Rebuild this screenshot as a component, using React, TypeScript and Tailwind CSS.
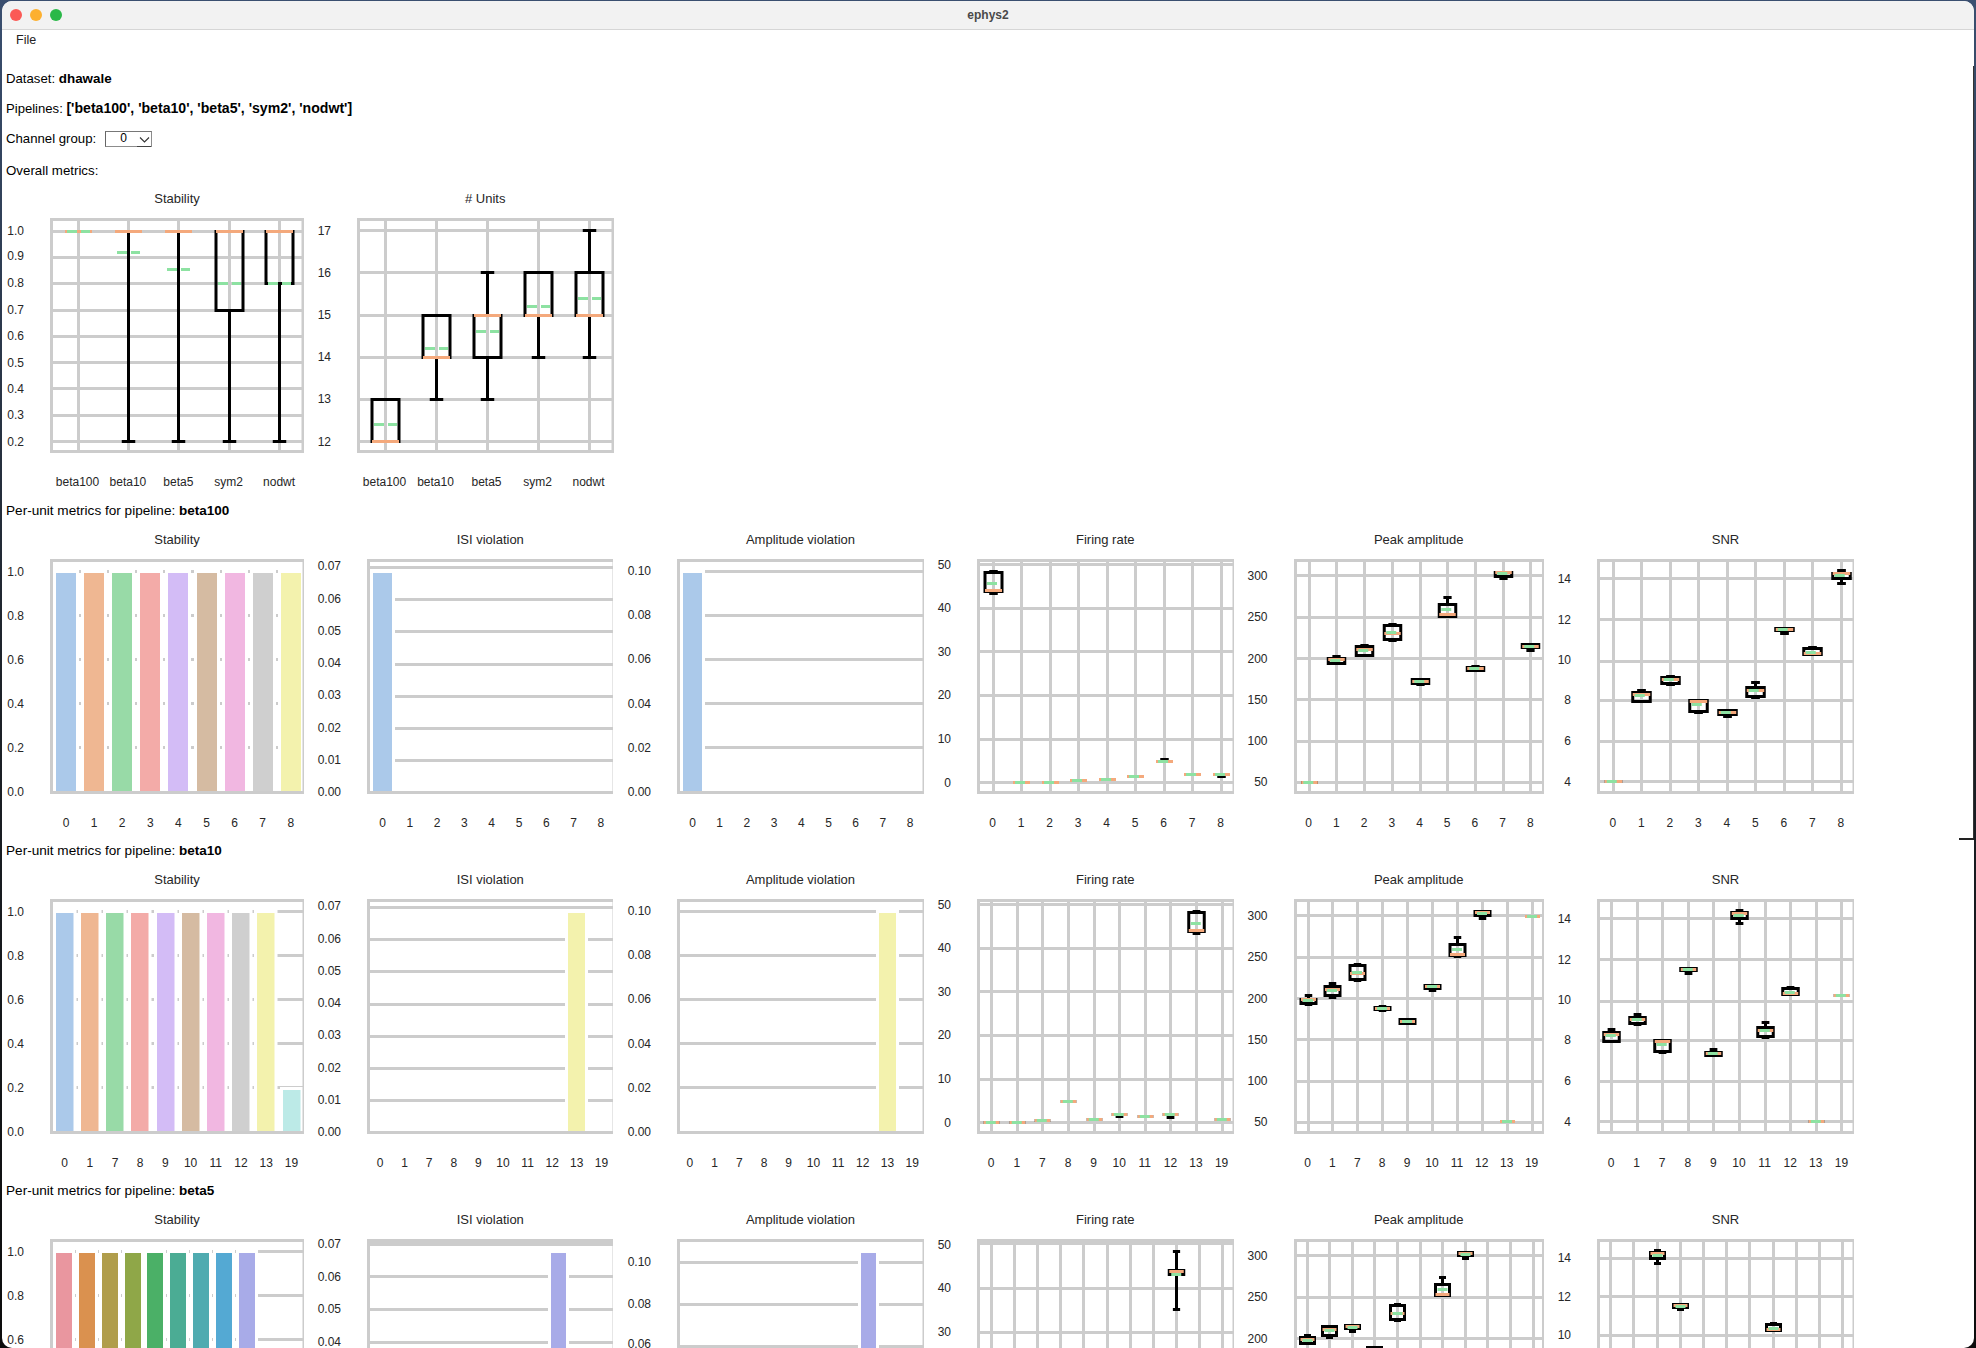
import { ReactNode } from "react"

const GRID = "#cccccc"
const MEDIAN = "#f4a97c"
const MEAN = "#8de2a2"

// chart y values are kept in thirds of a pixel, counted so that 177 is the top of a plot
const Y0 = (v: number) => Math.round(v / 3 - 22)
const Y = (v: number) => Y0(v) + 0.5
const X = (v: number) => Math.round(v) + 0.5

type Box = { i: number; top: number; bot: number; med: number; mean: number; hi?: number; lo?: number }
type Bar = { i: number; color: string; top?: number }

const b = (i: number, top: number, bot: number, med: number, mean = med, hi?: number, lo?: number): Box => ({
  i, top, bot, med, mean, hi, lo,
})
const flat = (i: number, at: number) => b(i, at, at, at)

const PASTEL = ["#abc9ea", "#efb792", "#98daa7", "#f3aba8", "#d3bcf6", "#d5bba2", "#f1b7e1", "#cfcfcf", "#f3f2ad", "#bceae7"]
const HUSL = ["#e9969f", "#da914f", "#b09d4b", "#8fa748", "#4bb067", "#4bac94", "#4fabb0", "#54a9d3", "#a8abe8"]

const U9 = ["0", "1", "2", "3", "4", "5", "6", "7", "8"]
const U10 = ["0", "1", "7", "8", "9", "10", "11", "12", "13", "19"]
const OVERALL = ["beta100", "beta10", "beta5", "sym2", "nodwt"]

const ISI_Y = [197, 296, 392, 488, 584, 683, 779, 875]
const ISI_T = ["0.07", "0.06", "0.05", "0.04", "0.03", "0.02", "0.01", "0.00"]
const ISI_H = [200, 296, 392, 491, 587, 683, 779]
const AMP_Y = [212, 344, 476, 611, 743, 875]
const AMP_T = ["0.10", "0.08", "0.06", "0.04", "0.02", "0.00"]
const AMP_H = [214, 346, 478, 610, 742]
const STAB_Y = [215, 347, 479, 611, 743, 875]
const STAB_T = ["1.0", "0.8", "0.6", "0.4", "0.2", "0.0"]
const STAB_H = [214, 346, 478, 610, 742]
const FIRE_Y = [194, 323, 455, 584, 716, 848]
const FIRE_T = ["50", "40", "30", "20", "10", "0"]
const FIRE_H = [193, 325, 454, 586, 718, 847]
const PEAK_Y = [227, 350, 476, 599, 722, 845]
const PEAK_T = ["300", "250", "200", "150", "100", "50"]
const PEAK_H = [226, 352, 475, 598, 722, 847]
const SNR_Y = [236, 359, 479, 601, 722, 845]
const SNR_T = ["14", "12", "10", "8", "6", "4"]
const SNR_H = [235, 358, 482, 601, 724, 844]

type ChartProps = {
  title: string
  left: number
  width: number
  x0: number
  x1: number
  ticks: string[]
  tickY: number[]
  hLines: number[]
  xStart: number
  xStep: number
  xLabels?: string[]
  vLines?: number
  bars?: Bar[]
  barW?: number
  boxes?: Box[]
  boxW?: number
  rightW?: number
}

function BoxGlyph({ box, x, w }: { box: Box; x: number; w: number }) {
  const l = x - w / 2
  const cap = w / 4
  return (
    <g>
      {box.hi !== undefined && <line x1={x} x2={x} y1={Y(box.top)} y2={Y(box.hi)} stroke="#000" strokeWidth={3} />}
      {box.lo !== undefined && <line x1={x} x2={x} y1={Y(box.bot)} y2={Y(box.lo)} stroke="#000" strokeWidth={3} />}
      {box.hi !== undefined && <line x1={x - cap} x2={x + cap} y1={Y(box.hi)} y2={Y(box.hi)} stroke="#000" strokeWidth={3} />}
      {box.lo !== undefined && <line x1={x - cap} x2={x + cap} y1={Y(box.lo)} y2={Y(box.lo)} stroke="#000" strokeWidth={3} />}
      <path d={`M${l} ${Y(box.top)}H${l + w}V${Y(box.bot)}H${l}Z`} fill="none" stroke="#000" strokeWidth={3} />
      <line x1={l} x2={l + w} y1={Y(box.med)} y2={Y(box.med)} stroke={MEDIAN} strokeWidth={3} />
      <line x1={l + 2} x2={l + w - 2} y1={Y(box.mean)} y2={Y(box.mean)} stroke={MEAN} strokeWidth={3} strokeDasharray="10 4" />
    </g>
  )
}

function Chart({
  title, left, width, x0, x1, ticks, tickY, hLines, xStart, xStep, xLabels = [], vLines = 0, bars = [], barW = 18, boxes = [], boxW = 16, rightW = 1.5,
}: ChartProps) {
  const top = 37
  const bottom = 272
  const l = Math.round(x0)
  const r = Math.round(x1)
  return (
    <svg width={width} height={316} viewBox={`${left} 0 ${width} 316`} className="shrink-0">
      <text x={(x0 + x1) / 2} y={17} textAnchor="middle" dominantBaseline="central" className="text-[13px] fill-[#262626]">
        {title}
      </text>
      {ticks.map((t, i) => (
        <text key={t} x={x0 - 26} y={tickY[i] / 3 - 22} textAnchor="end" dominantBaseline="central" className="text-[12px] fill-[#262626]">
          {t}
        </text>
      ))}
      {xLabels.map((t, i) => (
        <text key={t} x={xStart + xStep * i} y={301} textAnchor="middle" dominantBaseline="central" className="text-[12px] fill-[#262626]">
          {t}
        </text>
      ))}
      {hLines.map((v) => (
        <line key={v} x1={l} x2={r} y1={Y(v)} y2={Y(v)} stroke={GRID} strokeWidth={3} />
      ))}
      {Array.from({ length: vLines }, (_, i) => (
        <line key={i} x1={X(xStart + xStep * i)} x2={X(xStart + xStep * i)} y1={top} y2={bottom} stroke={GRID} strokeWidth={3} />
      ))}
      {bars.map((bar) => {
        const y = Y0(bar.top ?? 219)
        return (
          <rect
            key={bar.i}
            x={Math.round(xStart + xStep * bar.i - barW / 2)}
            y={y}
            width={barW}
            height={Y0(873) - y}
            fill={bar.color}
            stroke="#ffffff"
            strokeWidth={6}
            paintOrder="stroke"
          />
        )
      })}
      {boxes.map((box) => (
        <BoxGlyph key={box.i} box={box} x={X(xStart + xStep * box.i)} w={boxW} />
      ))}
      <rect x={l} y={top} width={3} height={bottom - top} fill={GRID} />
      <rect x={l} y={top} width={r - l} height={3} fill={GRID} />
      <rect x={l} y={bottom - 3} width={r - l} height={3} fill={GRID} />
      <rect x={r - rightW} y={top} width={rightW} height={bottom - top} fill={GRID} />
    </svg>
  )
}

function Label({ children, className = "h-6 text-[12.6px]" }: { children: ReactNode; className?: string }) {
  return <div className={`flex items-center pl-1 text-black ${className}`}>{children}</div>
}

function PipelineRow({ name, charts }: { name: string; charts: ReactNode }) {
  return (
    <section className="h-[340px]">
      <Label className="h-6 pt-[2px] text-[13.6px]">
        Per-unit metrics for pipeline:&nbsp;<b className="text-[13.5px] font-bold">{name}</b>
      </Label>
      <div className="flex">{charts}</div>
    </section>
  )
}

const allBars = (colors: string[]) => colors.map((color, i) => ({ i, color }))

export default function App() {
  return (
    <div className="h-[1348px] w-[1976px] overflow-hidden bg-linear-to-b from-[#3a4f70] via-[#1d2229] to-[#0c0c0c] pt-px px-[2px] font-['Liberation_Sans',Arial,sans-serif]">
      <div className="relative h-[1347px] overflow-hidden rounded-[10px] bg-white">
        <header className="relative flex h-[29px] items-center gap-2 border-b border-[#d6d6d6] bg-[#f2f2f2] pl-2">
          <span className="h-3 w-3 rounded-full bg-[#fb5a55]" />
          <span className="h-3 w-3 rounded-full bg-[#fdb02f]" />
          <span className="h-3 w-3 rounded-full bg-[#2ab848]" />
          <span className="absolute inset-x-0 text-center text-[12px] font-bold text-[#4a4a4a]">ephys2</span>
        </header>
        <nav className="flex h-5 items-center pl-[14px] text-[12.5px] text-[#222222]">File</nav>

        <div className="mt-[17px] flex flex-col gap-1.5">
          <Label className="h-6 text-[13.2px]">
            Dataset:&nbsp;<b className="text-[13.4px] font-bold">dhawale</b>
          </Label>
          <Label className="h-6 text-[13.1px]">
            Pipelines:&nbsp;<b className="text-[14.1px] font-bold">['beta100', 'beta10', 'beta5', 'sym2', 'nodwt']</b>
          </Label>
          <Label className="h-6 text-[13.2px]">
            Channel group:
            <span className="ml-[9px] flex h-4 w-[47px] border border-[#8c8c8c] border-t-[#777777] border-l-[#666666] text-[12px]">
              <span className="w-8 pl-[14px] leading-[12px]">0</span>
              <span className="flex h-[15px] w-[15px] items-center justify-center border-b border-[#444444]">
                <svg width="11" height="7" viewBox="0 0 11 7" fill="none" stroke="#333333" strokeWidth="1.1">
                  <path d="M1 1.5 L5.5 6 L10 1.5" />
                </svg>
              </span>
            </span>
          </Label>
        </div>
        <Label className="mt-[7px] h-[23px] pt-[2px] text-[13.3px]">Overall metrics:</Label>

        <div className="mb-px flex">
          <Chart
            title="Stability"
            left={2}
            width={302}
            x0={50}
            x1={304}
            rightW={2.5}
            ticks={["1.0", "0.9", "0.8", "0.7", "0.6", "0.5", "0.4", "0.3", "0.2"]}
            tickY={[215, 292, 373, 452, 530, 611, 689, 767, 848]}
            hLines={[215, 295, 373, 454, 532, 610, 688, 769, 847]}
            xStart={77.5}
            xStep={50.4}
            vLines={5}
            xLabels={OVERALL}
            boxW={27}
            boxes={[
              flat(0, 217),
              b(1, 217, 217, 217, 280, undefined, 847),
              b(2, 217, 217, 217, 331, undefined, 847),
              b(3, 217, 454, 217, 373, undefined, 847),
              b(4, 217, 373, 217, 373, undefined, 847),
            ]}
          />
          <Chart
            title="# Units"
            left={304}
            width={312}
            x0={357}
            x1={613.5}
            rightW={2.5}
            ticks={["17", "16", "15", "14", "13", "12"]}
            tickY={[215, 341, 467, 593, 719, 848]}
            hLines={[214, 340, 468, 594, 720, 847]}
            xStart={384.5}
            xStep={51}
            vLines={5}
            xLabels={OVERALL}
            boxW={27}
            boxes={[
              b(0, 720, 847, 847, 796),
              b(1, 468, 594, 594, 568, undefined, 720),
              b(2, 468, 594, 468, 517, 340, 720),
              b(3, 340, 468, 468, 442, undefined, 594),
              b(4, 340, 468, 468, 418, 214, 594),
            ]}
          />
        </div>

        <PipelineRow
          name="beta100"
          charts={
            <>
              <Chart title="Stability" left={2} width={302} x0={50} x1={304} ticks={STAB_T} tickY={STAB_Y} hLines={STAB_H} xStart={66} xStep={28.1} xLabels={U9} barW={20} bars={allBars(PASTEL.slice(0, 9))} />
              <Chart title="ISI violation" left={304} width={309} x0={367} x1={613.5} ticks={ISI_T} tickY={ISI_Y} hLines={ISI_H} xStart={382.5} xStep={27.3} xLabels={U9} barW={19} bars={[{ i: 0, color: PASTEL[0] }]} />
              <Chart title="Amplitude violation" left={613} width={311} x0={677} x1={924} ticks={AMP_T} tickY={AMP_Y} hLines={AMP_H} xStart={692.5} xStep={27.2} xLabels={U9} barW={19} bars={[{ i: 0, color: PASTEL[0] }]} />
              <Chart
                title="Firing rate" left={924} width={310} x0={977} x1={1233.5} ticks={FIRE_T} tickY={FIRE_Y} hLines={FIRE_H} xStart={992.7} xStep={28.5} vLines={9} xLabels={U9} boxW={17}
                boxes={[b(0, 215, 272, 271, 250, 212, 278), flat(1, 845), flat(2, 845), flat(3, 841), flat(4, 838), flat(5, 829), b(6, 784, 784, 784, 784, 777), flat(7, 823), b(8, 823, 823, 823, 823, undefined, 829)]}
              />
              <Chart
                title="Peak amplitude" left={1234} width={310} x0={1293.5} x1={1544} rightW={2} ticks={PEAK_T} tickY={PEAK_Y} hLines={PEAK_H} xStart={1308.7} xStep={27.7} vLines={9} xLabels={U9} boxW={16.5}
                boxes={[flat(0, 845), b(1, 474, 490, 478, 480, 468), b(2, 438, 466, 447, 451, 435), b(3, 375, 416, 400, 397, 372, 419), b(4, 538, 548, 543, 543, undefined, 552), b(5, 312, 347, 343, 328, 292), b(6, 500, 510, 505, 505, 497), b(7, 215, 228, 217, 220, undefined, 234), b(8, 433, 442, 437, 438, undefined, 450)]}
              />
              <Chart
                title="SNR" left={1544} width={312} x0={1597} x1={1854} ticks={SNR_T} tickY={SNR_Y} hLines={SNR_H} xStart={1612.8} xStep={28.5} vLines={9} xLabels={U9} boxW={17.5}
                boxes={[flat(0, 844), b(1, 575, 603, 582, 586, 570), b(2, 530, 548, 538, 538, 527, 551), b(3, 600, 632, 604, 613, undefined, 636), b(4, 630, 642, 636, 636, undefined, 648), b(5, 562, 588, 571, 571, 545, 592), b(6, 384, 390, 387, 388, undefined, 398), b(7, 444, 462, 460, 455, 441), b(8, 218, 234, 219, 225, 211, 250)]}
              />
            </>
          }
        />

        <PipelineRow
          name="beta10"
          charts={
            <>
              <Chart title="Stability" left={2} width={302} x0={50} x1={304} ticks={STAB_T} tickY={STAB_Y} hLines={STAB_H} xStart={64.6} xStep={25.2} xLabels={U10} barW={17.5} bars={PASTEL.map((color, i) => ({ i, color, top: i === 9 ? 750 : 219 }))} />
              <Chart title="ISI violation" left={304} width={309} x0={367} x1={613.5} ticks={ISI_T} tickY={ISI_Y} hLines={ISI_H} xStart={380} xStep={24.6} xLabels={U10} barW={17} bars={[{ i: 8, color: PASTEL[8] }]} />
              <Chart title="Amplitude violation" left={613} width={311} x0={677} x1={924} ticks={AMP_T} tickY={AMP_Y} hLines={AMP_H} xStart={689.9} xStep={24.7} xLabels={U10} barW={17} bars={[{ i: 8, color: PASTEL[8] }]} />
              <Chart
                title="Firing rate" left={924} width={310} x0={977} x1={1233.5} ticks={FIRE_T} tickY={FIRE_Y} hLines={FIRE_H} xStart={991.2} xStep={25.6} vLines={10} xLabels={U10} boxW={15.5}
                boxes={[flat(0, 845), flat(1, 845), flat(2, 841), flat(3, 784), flat(4, 838), b(5, 823, 823, 823, 823, undefined, 829), flat(6, 829), b(7, 823, 823, 823, 823, undefined, 832), b(8, 215, 272, 271, 250, 212, 278), flat(9, 838)]}
              />
              <Chart
                title="Peak amplitude" left={1234} width={310} x0={1293.5} x1={1544} rightW={2} ticks={PEAK_T} tickY={PEAK_Y} hLines={PEAK_H} xStart={1307.5} xStep={24.9} vLines={10} xLabels={U10} boxW={15}
                boxes={[b(0, 476, 488, 478, 481, 466, 491), b(1, 438, 466, 447, 450, 430, 470), b(2, 375, 416, 398, 397, 372, 419), b(3, 500, 508, 505, 505, 497, 511), b(4, 537, 548, 542, 542), b(5, 434, 443, 438, 438, undefined, 450), b(6, 312, 346, 341, 328, 292, 349), b(7, 214, 226, 217, 220, undefined, 234), flat(8, 844), flat(9, 229)]}
              />
              <Chart
                title="SNR" left={1544} width={312} x0={1597} x1={1854} ticks={SNR_T} tickY={SNR_Y} hLines={SNR_H} xStart={1611} xStep={25.6} vLines={10} xLabels={U10} boxW={15.5}
                boxes={[b(0, 575, 603, 582, 586, 566), b(1, 530, 548, 538, 538, 523, 551), b(2, 600, 632, 604, 613, undefined, 636), b(3, 384, 390, 387, 388, undefined, 398), b(4, 636, 645, 638, 638, 628), b(5, 216, 234, 219, 225, 211, 250), b(6, 562, 588, 571, 571, 545, 592), b(7, 444, 462, 460, 455, 441), flat(8, 844), flat(9, 466)]}
              />
            </>
          }
        />

        {/* the last row runs off the bottom of the window, so only the ticks that show are listed */}
        <PipelineRow
          name="beta5"
          charts={
            <>
              <Chart title="Stability" left={2} width={302} x0={50} x1={304} ticks={["1.0", "0.8", "0.6"]} tickY={STAB_Y} hLines={STAB_H} xStart={63.8} xStep={22.9} barW={16} bars={allBars(HUSL)} />
              <Chart title="ISI violation" left={304} width={309} x0={367} x1={613.5} ticks={["0.07", "0.06", "0.05", "0.04"]} tickY={[191, 290, 386, 485]} hLines={[187, 192, 289, 388, 485, 581, 680, 776]} xStart={378} xStep={22.5} barW={15} bars={[{ i: 8, color: HUSL[8] }]} />
              <Chart title="Amplitude violation" left={613} width={311} x0={677} x1={924} ticks={["0.10", "0.08", "0.06"]} tickY={[245, 371, 493]} hLines={[247, 373, 498, 622, 747]} xStart={688} xStep={22.5} barW={15} bars={[{ i: 8, color: HUSL[8] }]} />
              <Chart
                title="Firing rate" left={924} width={310} x0={977} x1={1233.5} ticks={["50", "40", "30"]} tickY={FIRE_Y} hLines={[188, 325, 455, 586, 718, 847]} xStart={990.8} xStep={23.15} vLines={11} boxW={14.5}
                boxes={[b(8, 270, 282, 273, 282, 214, 388)]}
              />
              <Chart
                title="Peak amplitude" left={1234} width={310} x0={1293.5} x1={1544} rightW={2} ticks={["300", "250", "200"]} tickY={PEAK_Y} hLines={PEAK_H} xStart={1306.6} xStep={22.6} vLines={11} boxW={14}
                boxes={[b(0, 472, 488, 478, 481, 466, 490), b(1, 438, 464, 446, 450, undefined, 470), b(2, 435, 444, 438, 440, undefined, 452), b(3, 500, 520, 510, 510), b(4, 375, 418, 398, 398, 372, 421), b(6, 312, 346, 342, 328, 292), b(7, 216, 226, 218, 221, undefined, 235)]}
              />
              <Chart
                title="SNR" left={1544} width={312} x0={1597} x1={1854} ticks={["14", "12", "10"]} tickY={[235, 350, 464]} hLines={[233, 348, 465, 582, 700]} xStart={1610.2} xStep={23.2} vLines={11} boxW={14}
                boxes={[b(2, 216, 234, 220, 226, 210, 250), b(3, 373, 381, 376, 377, undefined, 388), b(7, 432, 450, 448, 443, 429)]}
              />
            </>
          }
        />

        <span className="absolute right-0 top-[65px] h-[773px] w-[1.5px] bg-[#333333]" />
        <span className="absolute right-0 top-[837px] h-[1.5px] w-[15px] bg-[#222222]" />
      </div>
    </div>
  )
}
